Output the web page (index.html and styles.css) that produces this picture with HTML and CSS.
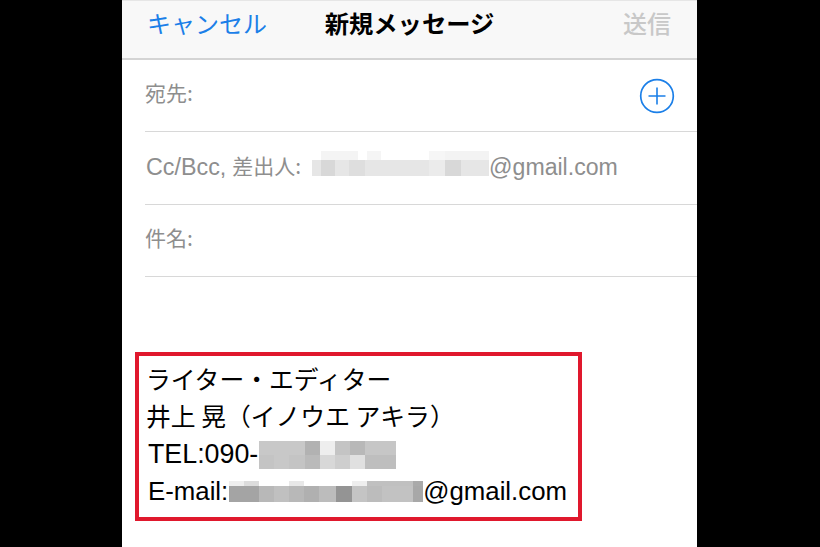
FILE: index.html
```html
<!DOCTYPE html>
<html lang="ja">
<head>
<meta charset="utf-8">
<title>新規メッセージ</title>
<link rel="stylesheet" href="styles.css">
</head>
<body>
<main class="phone">
  <header class="nav">
    <span class="nav-cancel">キャンセル</span>
    <span class="nav-title">新規メッセージ</span>
    <span class="nav-send">送信</span>
  </header>
  <section class="fields">
    <div class="field field-to">
      <span class="jp">宛先:</span>
      <svg class="add" width="36" height="36" viewBox="0 0 36 36" aria-hidden="true">
        <circle cx="18" cy="18" r="16.3" fill="none" stroke="#1b7fe8" stroke-width="1.7"/>
        <path d="M9.5 18h17M18 9.500v17" fill="none" stroke="#1b7fe8" stroke-width="1.6"/>
      </svg>
    </div>
    <div class="field field-cc">
      <span class="latin-s">Cc/Bcc,</span><span class="jp jp-cc">差出人:</span>
      <span class="mosaic mosaic-from"></span><span class="latin-m">@gmail.com</span>
    </div>
    <div class="field field-subject">
      <span class="jp">件名:</span>
    </div>
  </section>
  <section class="signature">
    <div class="sig-line"><span class="sig-jp">ライター・エディター</span></div>
    <div class="sig-line"><span class="sig-jp">井上 晃（イノウエ アキラ）</span></div>
    <div class="sig-line">TEL:090-<span class="mosaic mosaic-tel"></span></div>
    <div class="sig-line sig-mail">E-mail:<span class="mosaic mosaic-mail"></span>@gmail.com</div>
  </section>
</main>
</body>
</html>
```
FILE: styles.css
```css
* { box-sizing: border-box; }

html, body {
  margin: 0;
  height: 547px;
  overflow: hidden;
  background: #000;
}

body {
  display: flex;
  padding-left: 122px;
  font-family: "Liberation Sans", "Noto Sans CJK JP", sans-serif;
}

.phone {
  width: 575px;
  height: 547px;
  background: #fff;
  display: flex;
  flex-direction: column;
}

.nav {
  height: 60px;
  flex: none;
  background: #f8f8f8;
  border-top: 1px solid #e6e6e6;
  border-bottom: 2px solid #d4d4d4;
  display: grid;
  grid-template-columns: 1fr auto 1fr;
  align-items: center;
  padding: 0 26px 14px;
  font-family: "Noto Sans CJK JP", sans-serif;
  font-size: 24px;
  line-height: 34px;
}

.nav-cancel { color: #1b7fe8; margin-left: -1px; }

.nav-title {
  color: #000;
  font-weight: 700;
  font-size: 24.3px;
}

.nav-send {
  justify-self: end;
  color: #c8c8c8;
  font-weight: 500;
}

.fields {
  margin-left: 23px;
  flex: none;
}

.field {
  height: 73px;
  border-bottom: 1px solid #d8d8d8;
  display: flex;
  align-items: center;
  color: #8e8e8e;
  font-size: 23.300px;
  padding-bottom: 2px;
  padding-left: 1px;
}

.field-to { height: 72px; justify-content: space-between; padding-right: 22px; }
.field-to .add { margin-top: 3px; }
.field-subject { height: 72px; }

.latin-m { font-size: 23.100px; }

.jp {
  font-family: "Noto Sans CJK JP", sans-serif;
  font-size: 21px;
  margin-left: -1px;
  margin-bottom: 5px;
}

.jp-cc { margin-left: 6px; }

.signature {
  margin: 75px 0 0 13px;
  width: 447px;
  height: 169px;
  border: 4px solid #e0182d;
  padding: 5px 0 0 9px;
  color: #000;
  font-size: 26.800px;
}

.sig-line {
  height: 37.500px;
  display: flex;
  align-items: center;
  white-space: pre;
}

.sig-mail { font-size: 25.800px; padding-bottom: 2px; }

.sig-jp {
  font-family: "Noto Sans CJK JP", sans-serif;
  font-size: 24.800px;
  margin-left: -2px;
  margin-bottom: 4px;
}

.mosaic {
  display: block;
  flex: none;
  filter: blur(0.5px);
  background-repeat: no-repeat;
}

.mosaic-from {
  width: 177px;
  height: 25px;
  margin: 0 0 7px 11px;
  background-image:
    linear-gradient(90deg, #fff 0 5%, #f4f4f4 5% 26%, #fff 26% 31%, #f5f5f5 31% 39%, #fff 39% 66%, #f6f6f6 66% 75%, #f3f3f3 75% 100%),
    linear-gradient(90deg, #e6e6e6 0 5%, #d8d8d8 5% 13%, #e6e6e6 13% 21%, #dedede 21% 30%, #e6e6e6 30% 66%, #ebebeb 66% 75%, #d8d8d8 75% 84%, #e6e6e6 84% 100%);
  background-size: 100% 9px, 100% 16px;
  background-position: 0 0, 0 9px;
}

.mosaic-tel {
  width: 137px;
  height: 28px;
  margin-left: 1px;
  background-image:
    linear-gradient(90deg, #c8c8c8 0 33.300%, #b2b2b2 33.300% 44.400%, #eeeeee 44.400% 55.500%, #c4c4c4 55.500% 66.600%, #b8b8b8 66.600% 77.700%, #c6c6c6 77.700% 100%),
    linear-gradient(90deg, #c4c4c4 0 11.100%, #c8c8c8 11.100% 22.200%, #c4c4c4 22.200% 33.300%, #bababa 33.300% 44.400%, #d8d8d8 44.400% 55.500%, #cecece 55.500% 66.600%, #e0e0e0 66.600% 77.700%, #bebebe 77.700% 100%);
  background-size: 100% 14px, 100% 14px;
  background-position: 0 0, 0 14px;
}

.mosaic-mail {
  width: 194px;
  height: 21px;
  margin-left: 1px;
  background-image:
    linear-gradient(90deg, #eeeeee 0 7.700%, #dcdcdc 7.700% 15.400%, #fff 15.400% 30.800%, #e8e8e8 30.800% 38.500%, #fff 38.500% 63.500%, #eeeeee 63.500% 71%, #c0c0c0 71% 95%, #aaaaaa 95% 100%),
    linear-gradient(90deg, #a4a4a4 0 15.400%, #b8b8b8 15.400% 23.100%, #c0c0c0 23.100% 30.800%, #b8b8b8 30.800% 38.500%, #b0b0b0 38.500% 46.200%, #bcbcbc 46.200% 55%, #949494 55% 63.500%, #c4c4c4 63.500% 71%, #bcbcbc 71% 79%, #c2c2c2 79% 95%, #a8a8a8 95% 100%);
  background-size: 100% 5px, 100% 16px;
  background-position: 0 0, 0 5px;
}
```
